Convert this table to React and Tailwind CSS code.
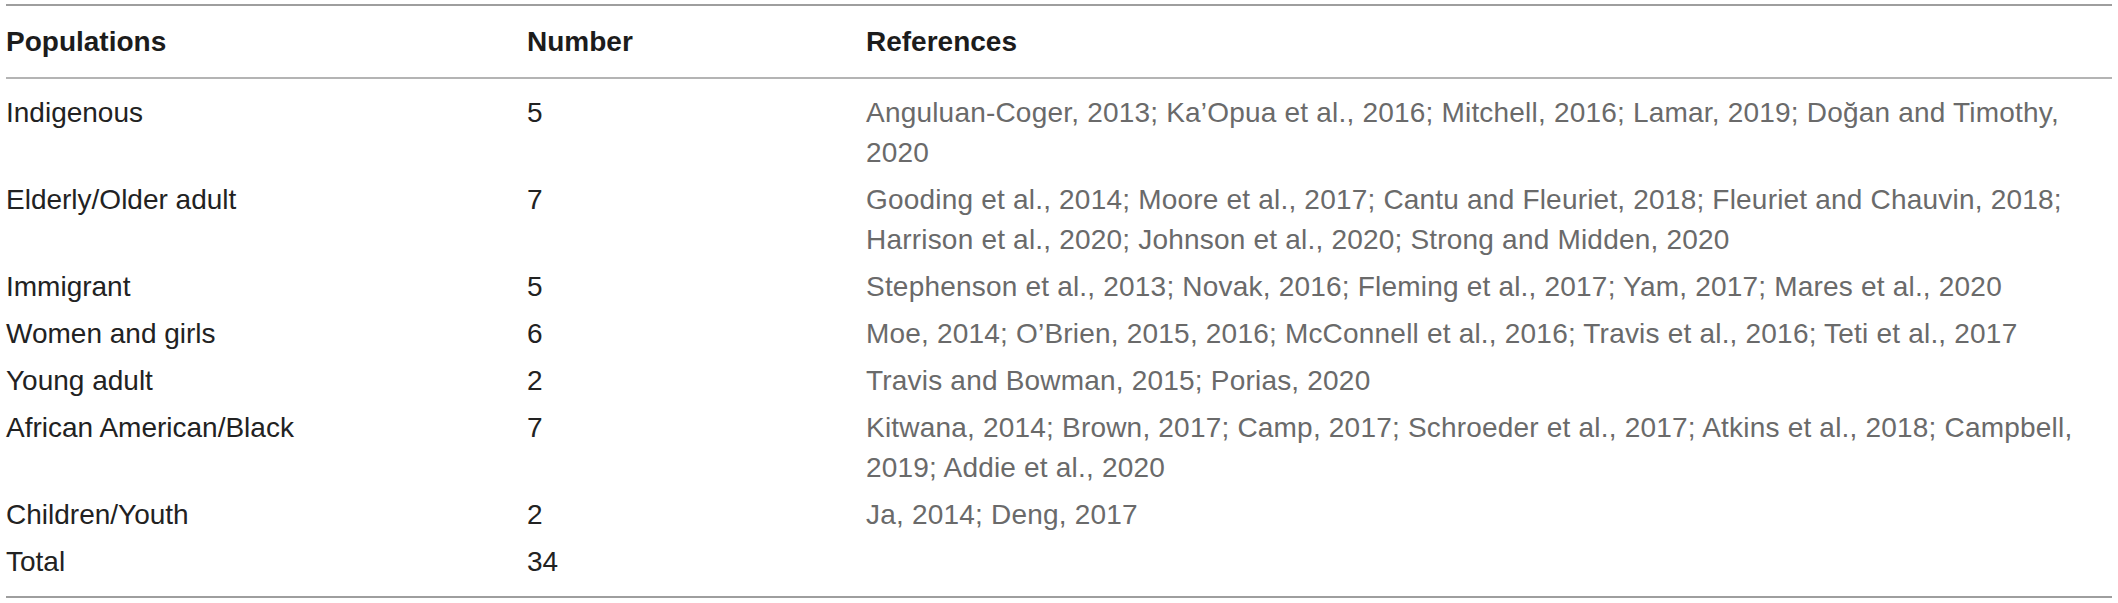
import React from 'react';

const rows = [
  {
    population: "Indigenous",
    number: "5",
    refs: "Anguluan-Coger, 2013; Ka’Opua et al., 2016; Mitchell, 2016; Lamar, 2019; Doğan and Timothy, 2020",
  },
  {
    population: "Elderly/Older adult",
    number: "7",
    refs: "Gooding et al., 2014; Moore et al., 2017; Cantu and Fleuriet, 2018; Fleuriet and Chauvin, 2018; Harrison et al., 2020; Johnson et al., 2020; Strong and Midden, 2020",
  },
  {
    population: "Immigrant",
    number: "5",
    refs: "Stephenson et al., 2013; Novak, 2016; Fleming et al., 2017; Yam, 2017; Mares et al., 2020",
  },
  {
    population: "Women and girls",
    number: "6",
    refs: "Moe, 2014; O’Brien, 2015, 2016; McConnell et al., 2016; Travis et al., 2016; Teti et al., 2017",
  },
  {
    population: "Young adult",
    number: "2",
    refs: "Travis and Bowman, 2015; Porias, 2020",
  },
  {
    population: "African American/Black",
    number: "7",
    refs: "Kitwana, 2014; Brown, 2017; Camp, 2017; Schroeder et al., 2017; Atkins et al., 2018; Campbell, 2019; Addie et al., 2020",
  },
  {
    population: "Children/Youth",
    number: "2",
    refs: "Ja, 2014; Deng, 2017",
  },
  {
    population: "Total",
    number: "34",
    refs: "",
  },
];

const App = () => {
  return (
    <div className="w-[2118px] h-[603px] bg-white pt-[4px] font-['Liberation_Sans',Arial,sans-serif] text-[28px] leading-[40px]">
      <div className="ml-[6px] w-[2106px] border-t-2 border-b-2 border-[#9e9e9e]">
        {/* header */}
        <div className="grid grid-cols-[521px_339px_1fr] pt-[16px] pb-[15px] border-b-2 border-[#b4b4b4] font-bold text-[#1c1c1c]">
          <div>Populations</div>
          <div>Number</div>
          <div>References</div>
        </div>

        <div className="pt-[10px] pb-[11px]">
          {rows.map((row, index) => (
            <div key={index} className="grid grid-cols-[521px_339px_1fr] py-[3.5px]">
              <div className="text-[#222222]">{row.population}</div>
              <div className="text-[#222222]">{row.number}</div>
              <div className="text-[#6a6a6a] tracking-[0.2px] pr-[24px]">{row.refs}</div>
            </div>
          ))}
        </div>
      </div>
    </div>
  );
};

export default App;
